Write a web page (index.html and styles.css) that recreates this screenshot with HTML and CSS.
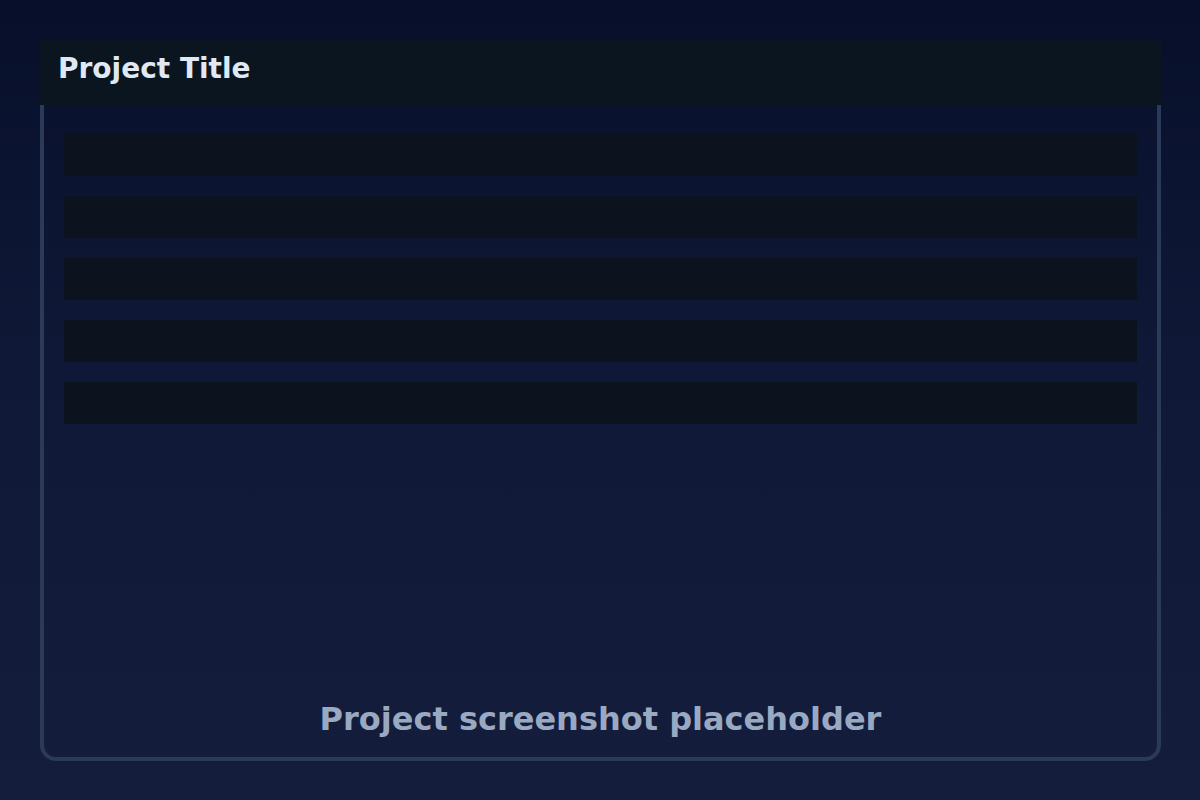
FILE: index.html
```html
<!DOCTYPE html>
<html>
<head>
<meta charset="utf-8">
<link rel="stylesheet" href="styles.css">
</head>
<body>
<div class="page">
  <div class="frame">
    <div class="header"><span class="title">Project Title</span></div>
    <div class="rows">
      <div class="row"></div>
      <div class="row"></div>
      <div class="row"></div>
      <div class="row"></div>
      <div class="row"></div>
    </div>
    <div class="caption">Project screenshot placeholder</div>
  </div>
</div>
</body>
</html>
```
FILE: styles.css
```css
html, body {
  margin: 0;
  padding: 0;
}
body {
  width: 1200px;
  height: 800px;
  background: linear-gradient(180deg, #070f2a 0%, #0f1937 45%, #141d3b 100%);
  font-family: "DejaVu Sans", "Liberation Sans", sans-serif;
  overflow: hidden;
}
.page {
  padding: 40px;
  box-sizing: border-box;
  height: 800px;
}
.frame {
  box-sizing: border-box;
  width: 1121px;
  height: 721px;
  border: 4px solid #2a3a58;
  border-radius: 16px;
  display: flex;
  flex-direction: column;
}
.header {
  margin: -4px -4px 0 -4px;
  height: 65px;
  background: #0b1520;
  display: flex;
  align-items: center;
  padding-left: 18px;
}
.title {
  color: #dfe9f3;
  font-size: 28px;
  font-weight: bold;
  position: relative;
  top: -4px;
}
.rows {
  display: flex;
  flex-direction: column;
  gap: 20px;
  padding: 29px 20px 0 20px;
}
.row {
  height: 42px;
  background: #0c131f;
}
.caption {
  margin-top: auto;
  text-align: center;
  color: #9aa9c2;
  font-size: 32px;
  font-weight: bold;
  padding-bottom: 19px;
}
```
